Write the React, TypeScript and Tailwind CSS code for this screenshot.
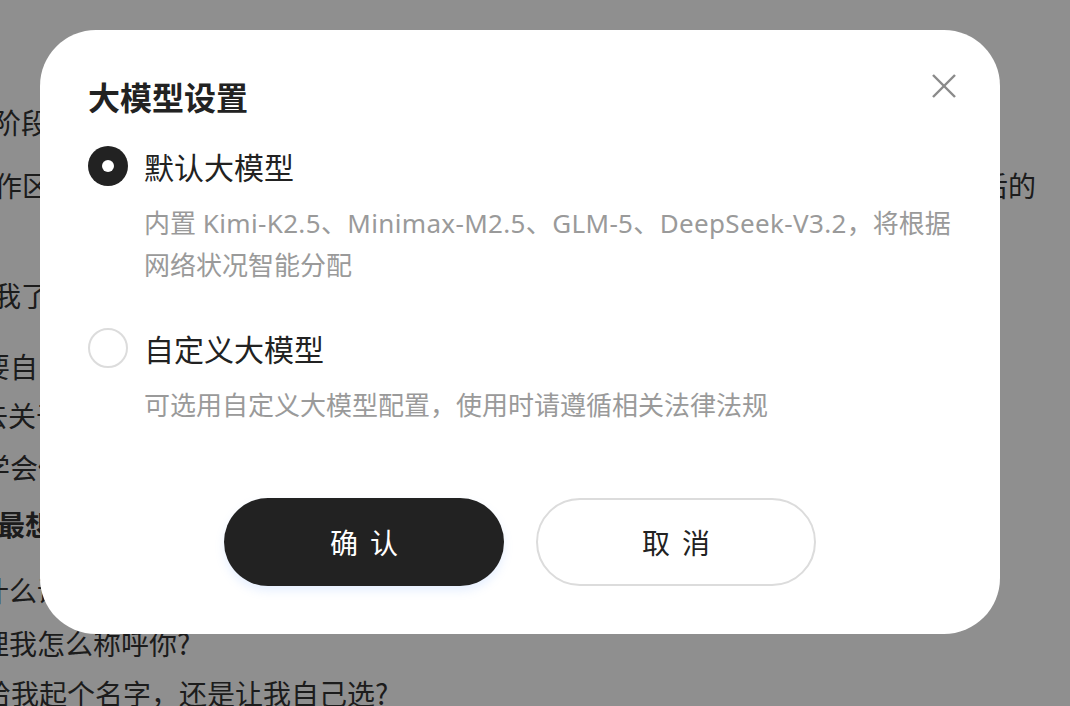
import React from "react";

const FONT = '"Liberation Sans", "Noto Sans CJK SC", sans-serif';
const CJK = '"Noto Sans CJK SC", sans-serif';
const DESC = '"Noto Sans", "Noto Sans CJK SC", sans-serif';

function Radio({ checked }: { checked: boolean }) {
  if (checked) {
    return (
      <span className="flex h-[40px] w-[40px] shrink-0 items-center justify-center rounded-full bg-[#222222]">
        <span className="h-[12px] w-[12px] rounded-full bg-white" />
      </span>
    );
  }
  return <span className="h-[40px] w-[40px] shrink-0 rounded-full border-2 border-[#dcdcdc] bg-white" />;
}

function Option({
  checked,
  label,
  desc,
}: {
  checked: boolean;
  label: string;
  desc: React.ReactNode;
}) {
  return (
    <div>
      <div className="flex items-center gap-[16px]">
        <Radio checked={checked} />
        <span className="text-[30px] leading-[40px] text-[#222222]" style={{ fontFamily: CJK }}>
          {label}
        </span>
      </div>
      <p
        className="ml-[56px] mt-[16px] text-[26px] leading-[42px] whitespace-nowrap text-[#9a9a9a]"
        style={{ fontFamily: DESC }}
      >
        {desc}
      </p>
    </div>
  );
}

export default function App() {
  return (
    <div
      className="relative h-[706px] w-[1070px] overflow-hidden bg-white text-[#333333]"
      style={{ fontFamily: FONT }}
    >
      {/* page behind the dialog */}
      <div className="flex flex-col pt-[102px] text-[28px] leading-[40px] whitespace-nowrap" style={{ fontFamily: CJK }}>
        <div className="ml-[-7px]">阶段</div>
        <div className="mt-[23px] flex justify-between">
          <span className="ml-[-6px]">作区</span>
          <span className="mr-[34px]">后的</span>
        </div>
        <div className="mt-[70px] ml-[-7px]">我了</div>
        <div className="mt-[31px] ml-[-18px]">要自己</div>
        <div className="mt-[9px] ml-[-20px]">去关于</div>
        <div className="mt-[12px] ml-[-18px]">学会做</div>
        <div className="mt-[17px] ml-[-3px] font-bold">最想</div>
        <div className="mt-[26px] ml-[-19px]">什么话</div>
        <div className="mt-[13px] ml-[-19px]">理我怎么称呼你?</div>
        <div className="mt-[10px] ml-[-17px]">给我起个名字，还是让我自己选?</div>
      </div>

      {/* overlay */}
      <div className="absolute inset-0 bg-black/[0.44] pl-[40px] pt-[30px]">
        <div className="w-[960px] rounded-[56px] bg-white px-[48px] pt-[46px] pb-[48px]">
          <div className="flex items-start justify-between">
            <h2 className="text-[32px] leading-[40px] font-semibold text-[#222222]" style={{ fontFamily: CJK }}>
              大模型设置
            </h2>
            <button className="-mr-[4px] -mt-[2px] h-[24px] w-[24px]" aria-label="关闭">
              <svg viewBox="0 0 24 24" width="24" height="24" fill="none" stroke="#8a8a8a" strokeWidth="2.4">
                <line x1="1" y1="1" x2="23" y2="23" />
                <line x1="23" y1="1" x2="1" y2="23" />
              </svg>
            </button>
          </div>

          <div className="mt-[30px]">
            <Option
              checked
              label="默认大模型"
              desc={
                <>
                  内置 <span className="tracking-[0.35px]">Kimi-K2.5、Minimax-M2.5、GLM-5、DeepSeek-V3.2</span>，将根据
                  <br />
                  网络状况智能分配
                </>
              }
            />
          </div>

          <div className="mt-[42px]">
            <Option checked={false} label="自定义大模型" desc="可选用自定义大模型配置，使用时请遵循相关法律法规" />
          </div>

          <div className="mt-[72px] flex justify-center gap-[32px]" style={{ fontFamily: CJK }}>
            <button className="h-[88px] w-[280px] rounded-full bg-[#222222] pl-[12px] text-[28px] tracking-[12px] text-white shadow-[0_5px_10px_rgba(120,170,255,0.18)]">
              确认
            </button>
            <button className="h-[88px] w-[280px] rounded-full border-2 border-[#dcdcdc] bg-white pl-[12px] text-[28px] tracking-[12px] text-[#222222]">
              取消
            </button>
          </div>
        </div>
      </div>
    </div>
  );
}
